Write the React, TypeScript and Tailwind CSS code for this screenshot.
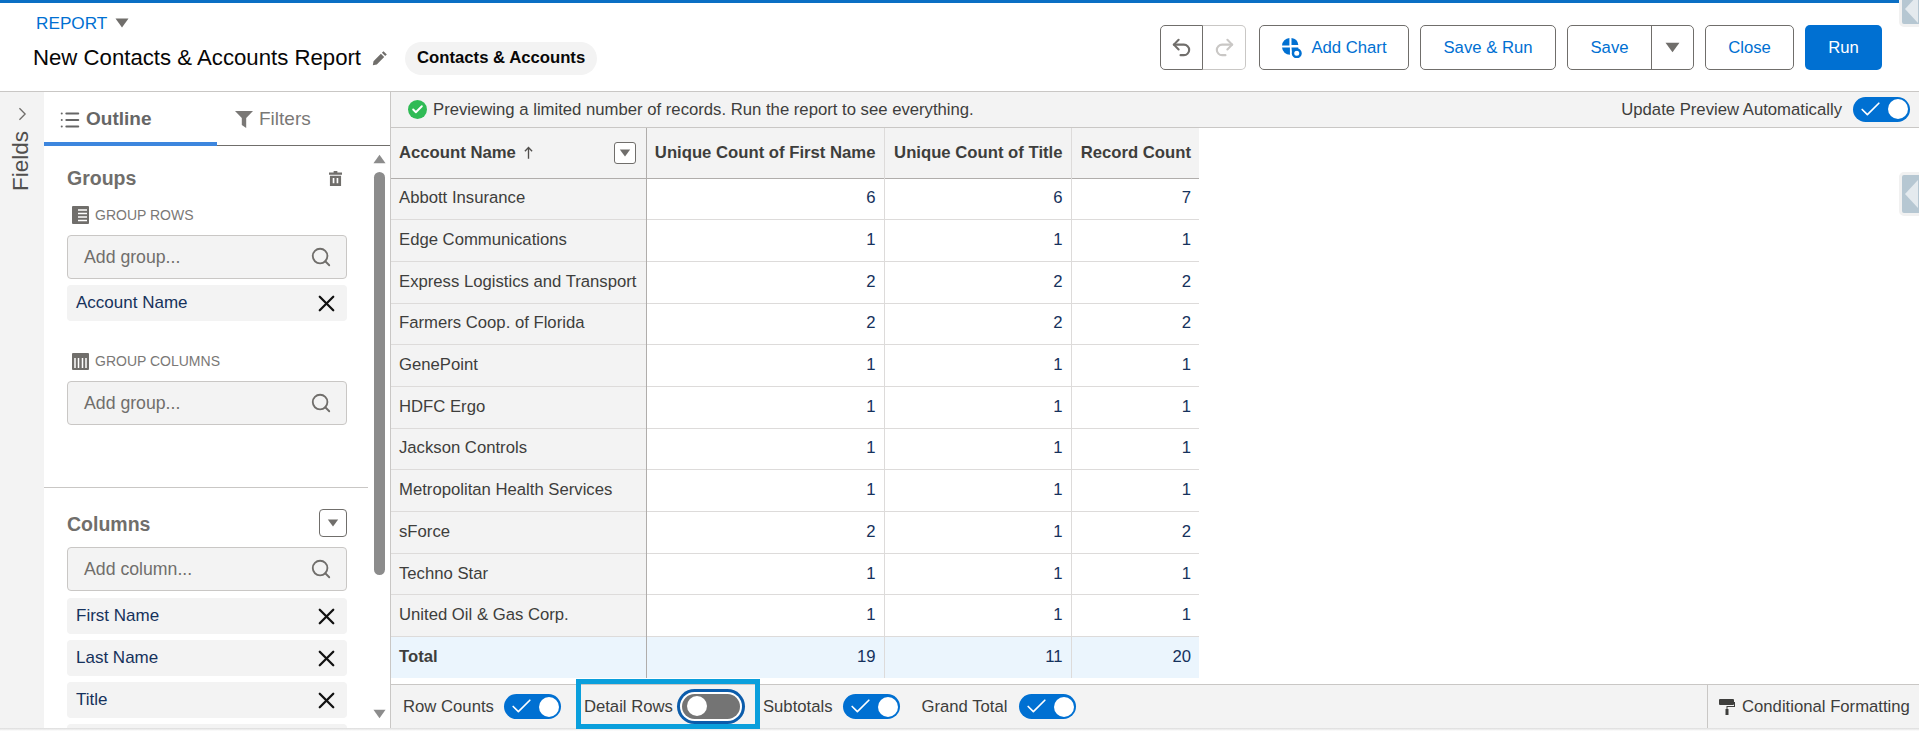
import React from 'react';
import { Check, List, Redo2, Search, Undo2, X } from 'lucide-react';

const rows = [
  ['Abbott Insurance', 6, 6, 7],
  ['Edge Communications', 1, 1, 1],
  ['Express Logistics and Transport', 2, 2, 2],
  ['Farmers Coop. of Florida', 2, 2, 2],
  ['GenePoint', 1, 1, 1],
  ['HDFC Ergo', 1, 1, 1],
  ['Jackson Controls', 1, 1, 1],
  ['Metropolitan Health Services', 1, 1, 1],
  ['sForce', 2, 1, 2],
  ['Techno Star', 1, 1, 1],
  ['United Oil & Gas Corp.', 1, 1, 1],
];

const Caret = ({ className = '' }: { className?: string }) => (
  <svg viewBox="0 0 14 10" className={className} fill="currentColor">
    <path d="M0.5 0.5h13L7 9.5z" />
  </svg>
);

const Toggle = () => (
  <span className="flex h-[25px] w-[57px] shrink-0 items-center justify-between rounded-full bg-[#0070d2] pl-[5px] pr-[2px]">
    <Check size={25} strokeWidth={1.6} className="text-white" />
    <span className="h-[20px] w-[20px] rounded-full bg-white" />
  </span>
);

const Pill = ({ label }: { label: string }) => (
  <div className="flex h-[36px] items-center justify-between rounded bg-[#f3f3f3] pl-[9px] pr-[7px] text-[17px] text-[#16325c]">
    <span>{label}</span>
    <X size={27} strokeWidth={2} className="text-[#111]" />
  </div>
);

const SearchBox = ({ placeholder }: { placeholder: string }) => (
  <div className="flex h-[44px] items-center justify-between rounded border border-[#c9c7c5] bg-[#f3f3f3] pl-[16px] pr-[14px] text-[#706e6b]">
    <span className="text-[17.7px]">{placeholder}</span>
    <Search size={22} strokeWidth={2} />
  </div>
);

const OutlineButton = ({ children, className = '' }: { children: React.ReactNode; className?: string }) => (
  <button className={`flex h-[45px] items-center justify-center rounded-[5px] border border-[#706e6b] bg-white text-[#0070d2] ${className}`}>
    {children}
  </button>
);

export default function App() {
  return (
    <div className="relative flex h-[731px] w-[1919px] flex-col overflow-hidden bg-white font-['Liberation_Sans',Arial,sans-serif] text-[16.7px] text-[#3e3e3c]">
      <div className="h-[3px] shrink-0 bg-[#0b6fc4]" />

      {/* header */}
      <header className="flex h-[89px] shrink-0 items-start justify-between border-b border-[#c9c7c5] pl-[33px] pr-[37px]">
        <div>
          <div className="mt-[11px] flex items-center gap-[8px] pl-[3px] text-[17.2px] text-[#0070d2]">
            <span className="leading-[18px]">REPORT</span>
            <Caret className="h-[10px] w-[14px] text-[#706e6b]" />
          </div>
          <div className="mt-[9px] flex items-center">
            <span className="text-[22.2px] leading-[34px] text-[#080707]">New Contacts & Accounts Report</span>
            <svg viewBox="0 0 16 16" className="ml-[11px] h-[16px] w-[16px] text-[#706e6b]" fill="currentColor">
              <path d="M11.5 1.2l3.3 3.3-1.6 1.6-3.3-3.3zM8.9 3.8l3.3 3.3-7.4 7.4-4 .7.7-4z" />
            </svg>
            <span className="ml-[17px] flex h-[33px] items-center rounded-full bg-[#f3f3f3] px-[12px] font-bold text-[#080707]">
              Contacts & Accounts
            </span>
          </div>
        </div>

        <div className="mt-[22px] flex items-center gap-[11px]">
          <div className="flex h-[45px] w-[86px]">
            <span className="flex w-[43px] items-center justify-center rounded-l-[5px] border border-[#706e6b] text-[#706e6b]">
              <Undo2 size={23} strokeWidth={2.2} />
            </span>
            <span className="flex w-[43px] items-center justify-center rounded-r-[5px] border border-l-0 border-[#c9c7c5] text-[#c9c7c5]">
              <Redo2 size={23} strokeWidth={2.2} />
            </span>
          </div>
          <OutlineButton className="ml-[2px] w-[150px] gap-[9px]">
            <svg viewBox="0 0 20 20" className="h-[21px] w-[21px]">
              <path d="M8 1v7H1a7.500 7.500 0 0 1 7-7zM10 1a7.500 7.500 0 0 1 6.500 6.500H10zM1 10h7.500v7A7.500 7.500 0 0 1 1 10z" fill="#0070d2" />
              <path d="M10 10h6.500a7 7 0 0 1-1 3l-2-.5-3 3z" fill="#0070d2" />
              <circle cx="15" cy="15.500" r="3.600" fill="none" stroke="#0070d2" strokeWidth="2.400" />
            </svg>
            <span>Add Chart</span>
          </OutlineButton>
          <OutlineButton className="w-[136px]">Save & Run</OutlineButton>
          <div className="flex h-[45px] w-[127px] rounded-[5px] border border-[#706e6b]">
            <span className="flex w-[83px] items-center justify-center pt-[1px] text-[#0070d2]">Save</span>
            <span className="flex flex-1 items-center justify-center border-l border-[#706e6b]">
              <Caret className="h-[11px] w-[15px] text-[#706e6b]" />
            </span>
          </div>
          <OutlineButton className="w-[89px]">Close</OutlineButton>
          <button className="flex h-[45px] w-[77px] items-center justify-center rounded-[5px] bg-[#0070d2] text-white">Run</button>
        </div>
      </header>

      <div className="flex h-[636px] shrink-0">
        {/* collapsed fields rail */}
        <div className="flex w-[44px] shrink-0 flex-col items-center bg-[#f3f3f3] pt-[15px] text-[#514f4d]">
          <svg viewBox="0 0 10 16" className="h-[14px] w-[9px]" fill="none" stroke="#706e6b" strokeWidth="1.5">
            <path d="M1.500 1.500L8 8l-6.500 6.500" />
          </svg>
          <div className="mt-[10px] -translate-x-[1px] rotate-180 text-[22.5px] leading-[24px] [writing-mode:vertical-rl]">Fields</div>
        </div>

        {/* outline panel */}
        <div className="flex w-[347px] shrink-0 flex-col overflow-hidden border-r border-[#c9c7c5]">
          <div className="flex h-[54px] shrink-0 border-b border-[#706e6b]">
            <div className="-mb-px flex w-[173px] items-center gap-[5px] border-b-[4px] border-[#3d86de] pl-[15px] pt-[5px] text-[19px] font-bold text-[#666]">
              <List size={22} strokeWidth={2.2} />
              <span>Outline</span>
            </div>
            <div className="flex flex-1 items-center gap-[6px] pl-[18px] pt-[2px] text-[19px] text-[#7a7876]">
              <svg viewBox="0 0 18 17" className="h-[17px] w-[18px]" fill="currentColor">
                <path d="M0 0h18l-6.800 7v10l-4.400-3V7z" />
              </svg>
              <span>Filters</span>
            </div>
          </div>

          <div className="flex min-h-0 flex-1">
            <div className="flex w-[324px] shrink-0 flex-col overflow-hidden">
              <section className="h-[342px] shrink-0 border-b border-[#c9c7c5] pl-[23px] pr-[21px] pt-[21px]">
                <div className="flex items-center justify-between pr-[3px]">
                  <span className="text-[19.5px] font-bold leading-[22px] text-[#706e6b]">Groups</span>
                  <svg viewBox="0 0 14 16" className="mr-[2px] h-[15px] w-[13px] text-[#706e6b]" fill="currentColor">
                    <path d="M5 0h4v1.500h5V4H0V1.500h5zM1 5h12v11H1zm3 2.500V13h1.800V7.500zm4.200 0V13H10V7.500z" fillRule="evenodd" />
                  </svg>
                </div>
                <div className="mt-[17px] flex items-center gap-[6px] pl-[5px] text-[14px] leading-[18px] text-[#7a7876]">
                  <svg viewBox="0 0 17 18" className="h-[18px] w-[17px]">
                    <rect width="17" height="18" rx="1" fill="#706e6b" />
                    <path d="M6 4h9M6 7.500h9M6 11h9M6 14.500h9" stroke="#fff" strokeWidth="1.500" />
                  </svg>
                  <span>GROUP ROWS</span>
                </div>
                <div className="mt-[11px]"><SearchBox placeholder="Add group..." /></div>
                <div className="mt-[6px]"><Pill label="Account Name" /></div>
                <div className="mt-[32px] flex items-center gap-[6px] pl-[5px] text-[14px] leading-[17px] text-[#7a7876]">
                  <svg viewBox="0 0 17 17" className="h-[17px] w-[17px]">
                    <rect width="17" height="17" rx="1" fill="#706e6b" />
                    <path d="M3 5v10M6.500 5v10M10.500 5v10M14 5v10" stroke="#fff" strokeWidth="1.500" />
                  </svg>
                  <span>GROUP COLUMNS</span>
                </div>
                <div className="mt-[11px]"><SearchBox placeholder="Add group..." /></div>
              </section>

              <section className="pl-[23px] pr-[21px] pt-[21px]">
                <div className="flex items-center justify-between">
                  <span className="translate-y-[1px] text-[19.5px] font-bold leading-[22px] text-[#706e6b]">Columns</span>
                  <span className="flex h-[28px] w-[28px] items-center justify-center rounded border border-[#706e6b]">
                    <Caret className="h-[8px] w-[12px] text-[#706e6b]" />
                  </span>
                </div>
                <div className="mt-[10px]"><SearchBox placeholder="Add column..." /></div>
                <div className="mt-[7px] flex flex-col gap-[6px]">
                  <Pill label="First Name" />
                  <Pill label="Last Name" />
                  <Pill label="Title" />
                  <div className="h-[36px] shrink-0 rounded bg-[#f3f3f3]" />
                </div>
              </section>
            </div>

            {/* panel scrollbar */}
            <div className="flex flex-1 flex-col items-center pt-[8px]">
              <Caret className="h-[10px] w-[13px] rotate-180 text-[#8c8c8c]" />
              <div className="mt-[8px] h-[403px] w-[11px] rounded-full bg-[#8c8c8c]" />
              <Caret className="mt-[134px] h-[10px] w-[13px] text-[#8c8c8c]" />
            </div>
          </div>
        </div>

        {/* preview */}
        <div className="flex min-w-0 flex-1 flex-col">
          <div className="flex h-[36px] shrink-0 items-center justify-between border-b border-[#c9c7c5] bg-[#f3f3f3] pl-[17px] pr-[9px]">
            <div className="flex items-center gap-[6px]">
              <span className="flex h-[19px] w-[19px] items-center justify-center rounded-full bg-[#2fbb55]">
                <Check size={13} strokeWidth={3.5} className="text-white" />
              </span>
              <span>Previewing a limited number of records. Run the report to see everything.</span>
            </div>
            <div className="flex items-center gap-[11px]">
              <span>Update Preview Automatically</span>
              <Toggle />
            </div>
          </div>

          <div className="min-h-0 flex-1">
            <table className="w-[808px] table-fixed border-collapse">
              <colgroup>
                <col className="w-[255px]" />
                <col className="w-[238px]" />
                <col className="w-[187px]" />
                <col className="w-[128px]" />
              </colgroup>
              <thead>
                <tr className="h-[50px] border-b border-[#b0adab] bg-[#f3f3f3] font-bold">
                  <th className="border-r border-[#b0adab] px-[8px] text-left">
                    <div className="flex items-center justify-between">
                      <span className="flex items-center gap-[8px]">
                        Account Name
                        <svg viewBox="0 0 10 14" className="h-[13px] w-[9px]" fill="none" stroke="#514f4d" strokeWidth="1.500">
                          <path d="M5 14V2M1 5.500L5 1.500l4 4" />
                        </svg>
                      </span>
                      <span className="mr-[2px] flex h-[22px] w-[22px] items-center justify-center rounded-[3px] border border-[#706e6b] bg-white">
                        <Caret className="h-[8px] w-[12px] text-[#706e6b]" />
                      </span>
                    </div>
                  </th>
                  <th className="whitespace-nowrap border-r border-[#dddbda] px-[8px] text-right">Unique Count of First Name</th>
                  <th className="whitespace-nowrap border-r border-[#dddbda] px-[8px] text-right">Unique Count of Title</th>
                  <th className="whitespace-nowrap px-[8px] text-right">Record Count</th>
                </tr>
              </thead>
              <tbody>
                {rows.map(([name, first, title, count]) => (
                  <tr key={name} className="h-[41.7px] border-b border-[#dddbda]">
                    <td className="whitespace-nowrap border-r border-[#b0adab] bg-[#f3f3f3] px-[8px] pb-[2px]">{name}</td>
                    <td className="border-r border-[#dddbda] px-[8px] pb-[2px] text-right text-[#16325c]">{first}</td>
                    <td className="border-r border-[#dddbda] px-[8px] pb-[2px] text-right text-[#16325c]">{title}</td>
                    <td className="px-[8px] pb-[2px] text-right text-[#16325c]">{count}</td>
                  </tr>
                ))}
                <tr className="h-[41px] border-t border-[#b0adab] bg-[#ebf5fd]">
                  <td className="border-r border-[#b0adab] px-[8px] pb-[2px] font-bold">Total</td>
                  <td className="border-r border-[#dddbda] px-[8px] pb-[2px] text-right text-[#16325c]">19</td>
                  <td className="border-r border-[#dddbda] px-[8px] pb-[2px] text-right text-[#16325c]">11</td>
                  <td className="px-[8px] pb-[2px] text-right text-[#16325c]">20</td>
                </tr>
              </tbody>
            </table>
          </div>

          {/* footer toggles */}
          <div className="flex h-[44px] shrink-0 items-center border-t border-[#c9c7c5] bg-[#f3f3f3] pl-[12px]">
            <span>Row Counts</span>
            <span className="ml-[10px]"><Toggle /></span>
            <div className="relative ml-[23px] flex items-center">
              <span>Detail Rows</span>
              <span className="ml-[9px] flex h-[25px] w-[58px] items-center rounded-full bg-[#747474] pl-[5px] shadow-[0_0_0_2px_#fff,0_0_0_5px_#0b5cab]">
                <span className="h-[20px] w-[20px] rounded-full bg-white" />
              </span>
              <span className="absolute -left-[8px] -right-[20px] -top-[15px] h-[50px] border-[5px] border-[#0a9fdc]" />
            </div>
            <span className="ml-[23px]">Subtotals</span>
            <span className="ml-[10px]"><Toggle /></span>
            <span className="ml-[22px]">Grand Total</span>
            <span className="ml-[12px]"><Toggle /></span>
            <div className="ml-auto flex h-full w-[212px] items-center gap-[7px] border-l border-[#c9c7c5] pl-[11px]">
              <svg viewBox="0 0 16 16" className="h-[16px] w-[16px] text-[#3e3e3c]" fill="currentColor">
                <path d="M1 0h13a1 1 0 0 1 1 1v4a1 1 0 0 1-1 1H1a1 1 0 0 1-1-1V1a1 1 0 0 1 1-1z" />
                <path d="M15 3h1v5H8.500v2h1v6h-3v-6h1V7H15z" />
              </svg>
              <span>Conditional Formatting</span>
            </div>
          </div>
        </div>
      </div>

      <div className="h-[3px] shrink-0 bg-gradient-to-b from-[#dcdcdc] to-white" />

      {/* collapsed side handles */}
      <span className="absolute -top-[17px] left-[1899px] flex h-[44px] w-[30px] items-center rounded-[5px] border-[3px] border-[#f1f1f1] bg-[#b6c7d2] pl-[3px]">
        <span className="mt-[8px] h-0 w-0 border-y-[14px] border-r-[13px] border-y-transparent border-r-[#e4eaee]" />
      </span>
      <span className="absolute left-[1899px] top-[172px] flex h-[44px] w-[30px] items-center rounded-[5px] border-[3px] border-[#f1f1f1] bg-[#b6c7d2] pl-[3px]">
        <span className="h-0 w-0 border-y-[14px] border-r-[13px] border-y-transparent border-r-[#e4eaee]" />
      </span>
    </div>
  );
}
